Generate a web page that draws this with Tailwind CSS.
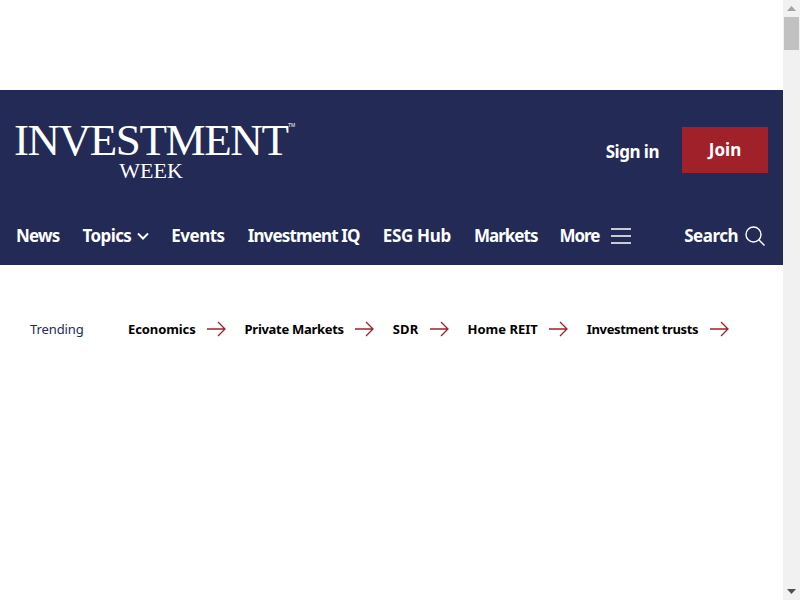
<!DOCTYPE html>
<html lang="en">
<head>
    <meta charset="UTF-8">
    <title>Investment Week</title>
    <script src="https://cdn.jsdelivr.net/npm/@tailwindcss/browser@4"></script>
</head>
<body class="bg-white overflow-hidden">
    <div class="flex h-[600px] w-[800px]">
        <div class="w-[783px] h-[600px] font-['Noto_Sans',sans-serif]">
            <!-- Ad space -->
            <div class="h-[90px]"></div>

            <!-- Header -->
            <header class="h-[175px] bg-[#232a55] text-white">
                <div class="h-[121px] flex justify-between pl-[14px] pr-[15px]">
                    <div class="relative w-[285px] pt-[28px] font-['Liberation_Serif',serif] text-center leading-none">
                        <div class="text-[45px] leading-[44px] tracking-[-1.4px] text-left whitespace-nowrap">INVESTMENT</div>
                        <div class="text-[22px] leading-[20px] w-[274px] -mt-[1px]">WEEK</div>
                        <span class="absolute left-[274px] top-[33px] text-[5px] leading-none font-['Liberation_Sans',sans-serif]">TM</span>
                    </div>
                    <div class="flex items-center gap-[23px]">
                        <a href="#" class="text-[17px] font-bold tracking-[-0.5px] mt-[2px]">Sign in</a>
                        <a href="#" class="w-[86px] h-[46px] mb-[2px] bg-[#a1212a] flex items-center justify-center text-[17px] font-bold tracking-[0px]">Join</a>
                    </div>
                </div>
                <nav class="h-[54px] flex items-start justify-between pl-[16px] pr-[18px] pt-[10px] text-[17px] font-bold tracking-[-0.6px] leading-[30px]">
                    <div class="flex items-center gap-[23px]">
                        <a href="#" class="tracking-[-0.8px]">News</a>
                        <a href="#" class="flex items-center gap-[6px]">Topics
                            <svg width="12" height="8" viewBox="0 0 12 8" fill="none" stroke="white" stroke-width="2"><path d="M1 1.5l5 5 5-5"/></svg>
                        </a>
                        <a href="#" class="-ml-[1px] tracking-[-0.5px]">Events</a>
                        <a href="#" class="tracking-[-0.85px]">Investment IQ</a>
                        <a href="#" class="tracking-[-0.3px]">ESG Hub</a>
                        <a href="#" class="tracking-[-1px]">Markets</a>
                        <a href="#" class="-ml-[1px] flex items-center gap-[11px] tracking-[-1px]">More
                            <svg width="20" height="16" viewBox="0 0 20 16" fill="none" stroke="white" stroke-width="1.5"><path d="M0 1h20M0 8h20M0 15h20"/></svg>
                        </a>
                    </div>
                    <a href="#" class="flex items-center gap-[7px] tracking-[-0.5px]">Search
                        <svg width="20" height="20" viewBox="0 0 20 20" fill="none" stroke="white" stroke-width="1.4"><circle cx="8.5" cy="8.5" r="7.5"/><path d="M14 14l5.5 5.5"/></svg>
                    </a>
                </nav>
            </header>

            <!-- Trending -->
            <div class="flex items-center pl-[30px] mt-[55px] h-[20px] text-[13px] text-black">
                <span class="w-[98px] text-[#232a55] tracking-[-0.1px]">Trending</span>
                <div class="flex items-center gap-[19px] font-bold tracking-[-0.1px]">
                    <a href="#" class="flex items-center gap-[11px]">Economics
                        <svg class="mb-[2px]" width="19" height="16" viewBox="0 0 19 16" fill="none" stroke="#a1212a" stroke-width="1.3"><path d="M0 8h18M11 1l7 7-7 7"/></svg>
                    </a>
                    <a href="#" class="flex items-center gap-[11px] tracking-[-0.3px]">Private Markets
                        <svg class="mb-[2px]" width="19" height="16" viewBox="0 0 19 16" fill="none" stroke="#a1212a" stroke-width="1.3"><path d="M0 8h18M11 1l7 7-7 7"/></svg>
                    </a>
                    <a href="#" class="flex items-center gap-[11px] tracking-[0.2px]">SDR
                        <svg class="mb-[2px]" width="19" height="16" viewBox="0 0 19 16" fill="none" stroke="#a1212a" stroke-width="1.3"><path d="M0 8h18M11 1l7 7-7 7"/></svg>
                    </a>
                    <a href="#" class="flex items-center gap-[11px] tracking-[0px]">Home REIT
                        <svg class="mb-[2px]" width="19" height="16" viewBox="0 0 19 16" fill="none" stroke="#a1212a" stroke-width="1.3"><path d="M0 8h18M11 1l7 7-7 7"/></svg>
                    </a>
                    <a href="#" class="flex items-center gap-[12px] tracking-[-0.35px]">Investment trusts
                        <svg class="mb-[2px]" width="19" height="16" viewBox="0 0 19 16" fill="none" stroke="#a1212a" stroke-width="1.3"><path d="M0 8h18M11 1l7 7-7 7"/></svg>
                    </a>
                </div>
            </div>
        </div>

        <!-- Scrollbar -->
        <div class="w-[17px] h-[600px] bg-[#f1f1f1] flex flex-col items-center justify-between">
            <div class="w-[17px]">
                <div class="h-[17px] flex items-center justify-center">
                    <svg width="9" height="5" viewBox="0 0 9 5" fill="#a3a3a3"><path d="M4.5 0L9 5H0z"/></svg>
                </div>
                <div class="w-[15px] h-[33px] mx-[1px] bg-[#c1c1c1]"></div>
            </div>
            <div class="h-[17px] flex items-center justify-center">
                <svg width="9" height="5" viewBox="0 0 9 5" fill="#505050"><path d="M0 0h9L4.5 5z"/></svg>
            </div>
        </div>
    </div>
</body>
</html>
